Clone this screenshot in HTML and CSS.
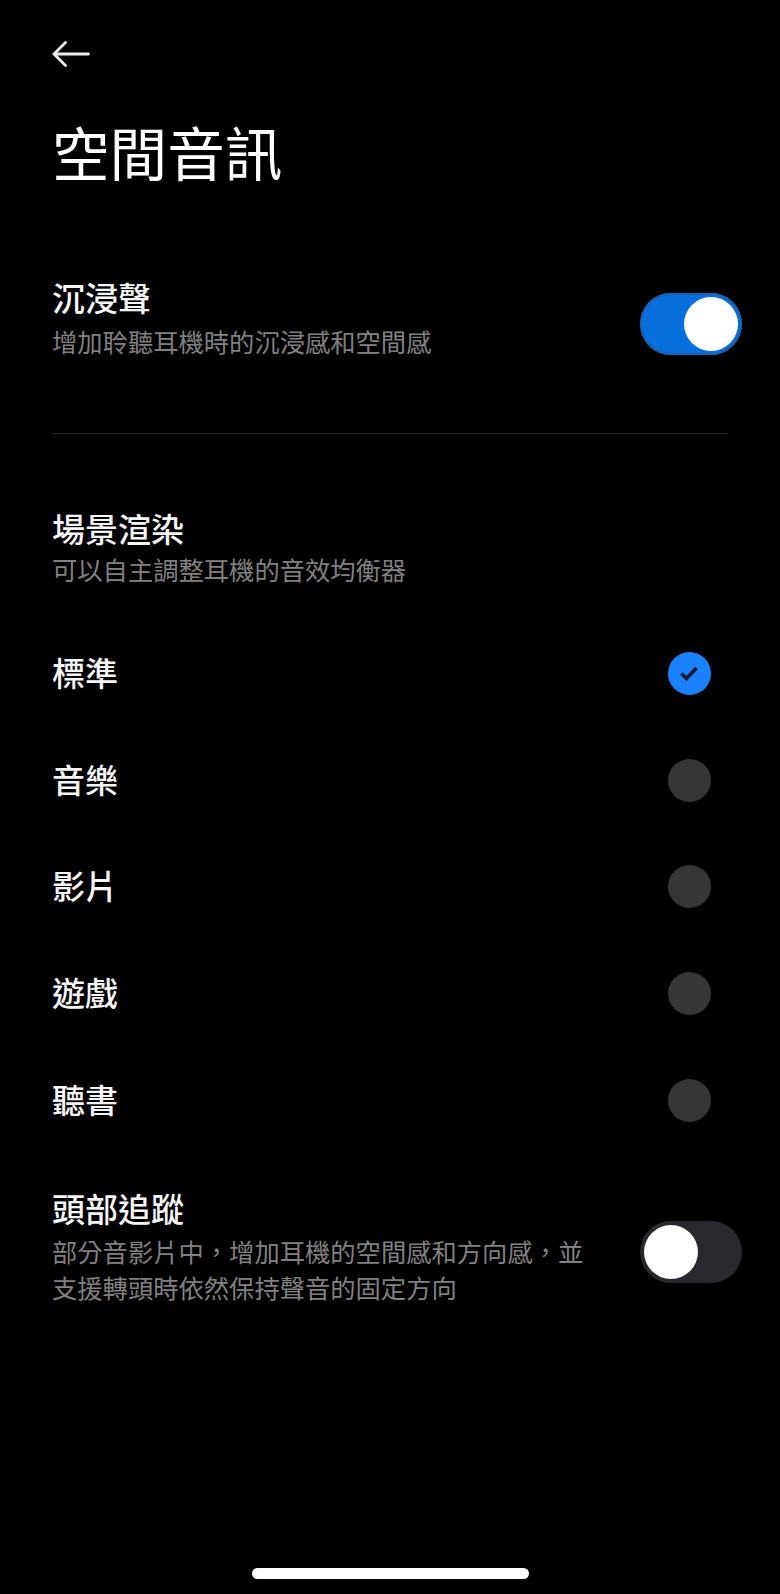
FILE: index.html
```html
<!DOCTYPE html>
<html lang="zh-Hant">
	<head>
		<meta charset="utf-8">
		<meta name="viewport" content="width=device-width">
		<title>空間音訊</title>
		<link rel="stylesheet" href="styles.css">
	</head>
	<body>
		<div class="page">
			<div class="topbar">
				<svg class="back" width="38" height="26" viewBox="0 0 38 26" fill="none" stroke="#ececec" stroke-width="2.8" stroke-linecap="round">
					<path d="M36.5 13H2M13.5 1.5L2 13l11.5 11.5"/>
				</svg>
			</div>
			<h1>空間音訊</h1>

			<div class="row row-immersive">
				<div class="texts">
					<div class="label">沉浸聲</div>
					<div class="hint">增加聆聽耳機時的沉浸感和空間感</div>
				</div>
				<div class="switch on"><span class="knob"></span></div>
			</div>

			<div class="divider"></div>

			<div class="section">
				<div class="label">場景渲染</div>
				<div class="hint">可以自主調整耳機的音效均衡器</div>
			</div>

			<div class="options">
				<div class="option">
					<span class="label">標準</span>
					<span class="radio checked">
						<svg width="20" height="16" viewBox="0 0 20 16" fill="none" stroke="#0a1a33" stroke-width="3.6">
							<path d="M2.5 8.5l5 5L17.5 3"/>
						</svg>
					</span>
				</div>
				<div class="option"><span class="label">音樂</span><span class="radio"></span></div>
				<div class="option"><span class="label">影片</span><span class="radio"></span></div>
				<div class="option"><span class="label">遊戲</span><span class="radio"></span></div>
				<div class="option"><span class="label">聽書</span><span class="radio"></span></div>
			</div>

			<div class="row row-head">
				<div class="texts">
					<div class="label">頭部追蹤</div>
					<div class="hint">部分音影片中<span class="comma">，</span>增加耳機的空間感和方向感<span class="comma">，</span>並<br>支援轉頭時依然保持聲音的固定方向</div>
				</div>
				<div class="switch"><span class="knob"></span></div>
			</div>
		</div>
		<div class="homebar"></div>
	</body>
</html>
```

FILE: styles.css
```css
* {
	box-sizing: border-box;
}

html, body {
	margin: 0;
	height: 100%;
}

body {
	position: relative;
	background-color: #000;
	color: #f5f5f5;
	font-family: "Noto Sans CJK TC", "Noto Sans", sans-serif;
	overflow: hidden;
}

.page {
	padding: 41px 52px 0;
}

.topbar {
	height: 26px;
}

.back {
	display: block;
}

h1 {
	margin: 46px 0 0;
	font-size: 57.6px;
	font-weight: 400;
	line-height: 76px;
	color: #fff;
}

.label {
	font-size: 33px;
	font-weight: 500;
	line-height: 42px;
	color: #f5f5f5;
}

.hint {
	margin-top: 4px;
	font-size: 25.3px;
	line-height: 36px;
	color: #808080;
}

/* the comma sits low and left in this UI, not centred as in the TC face */
.comma {
	font-family: "Noto Sans CJK SC", sans-serif;
}

.row {
	display: flex;
	justify-content: space-between;
	align-items: center;
}

.row-immersive {
	margin-top: 87px;
}

.row-immersive .hint {
	margin-top: 5px;
}

.row-immersive .switch {
	margin-top: 12px;
}

.row-head .switch {
	margin-top: 12px;
}

.switch {
	position: relative;
	width: 102px;
	height: 62px;
	margin-right: -14px;
	border-radius: 31px;
	background-color: #29292d;
}

.switch.on {
	background-color: #0870dc;
	box-shadow: inset 0 0 0 2px #1a62b4;
}

.knob {
	position: absolute;
	top: 4px;
	left: 4px;
	width: 54px;
	height: 54px;
	border-radius: 50%;
	background-color: #fff;
}

.switch.on .knob {
	left: 44px;
}

.divider {
	height: 1px;
	margin-top: 74px;
	background-color: #222;
}

.section {
	margin-top: 73px;
}

.section .hint {
	margin-top: 2px;
}

.options {
	margin-top: 33px;
}

.option {
	display: flex;
	justify-content: space-between;
	align-items: center;
	height: 106.75px;
	padding-right: 17.5px;
}

.option .label {
	padding-bottom: 3px;
}

.radio {
	display: flex;
	align-items: center;
	justify-content: center;
	width: 43px;
	height: 43px;
	border-radius: 50%;
	background-color: #363636;
}

.radio.checked {
	background-color: #1a82ff;
}

.row-head {
	margin-top: 33px;
}

.homebar {
	position: absolute;
	left: 252px;
	bottom: 15px;
	width: 277px;
	height: 11px;
	border-radius: 6px;
	background-color: #fff;
}
```
